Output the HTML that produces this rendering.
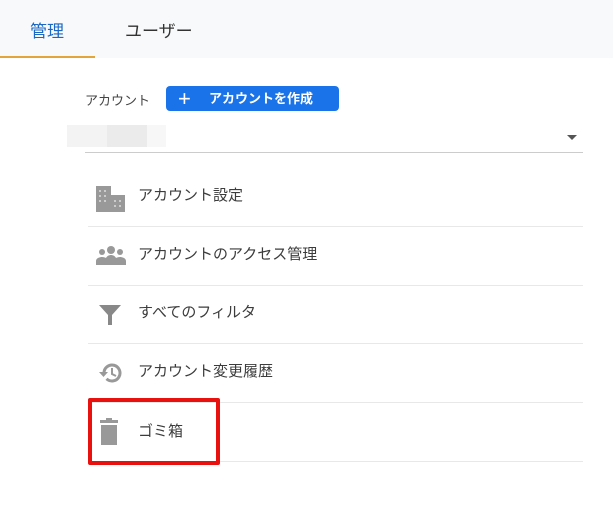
<!DOCTYPE html>
<html><head><meta charset="utf-8"><style>
body{margin:0;width:613px;height:527px;background:#fff;font-family:"Liberation Sans","Noto Sans CJK JP",sans-serif;position:relative;overflow:hidden}
.abs{position:absolute}
.top{left:0;top:0;width:613px;height:58px;background:#f8f9fa}
.t{font-size:17px;top:17px}
.row{position:absolute;left:138px;font-size:15px;color:#3c3c3c;line-height:20px}
.sep{position:absolute;left:88px;width:495px;height:1px;background:#e8e8e8}
.ic{position:absolute;left:96px}
</style></head><body>
<div class="abs top"></div>
<div class="abs t" style="left:30px;color:#1a67c4">管理</div>
<div class="abs t" style="left:125px;color:#333">ユーザー</div>
<div class="abs" style="left:0;top:56px;width:95px;height:2px;background:#e3a43c"></div>

<div class="abs" style="left:85px;top:90px;font-size:13px;color:#444">アカウント</div>
<div class="abs" style="left:166px;top:86px;width:173px;height:25px;background:#1a73e8;border-radius:4px;color:#fff;font-size:13px;font-weight:bold;line-height:25px">
<span style="position:absolute;left:12px;top:0;font-size:22px;font-weight:normal">+</span><span style="position:absolute;left:43px">アカウントを作成</span></div>
<div class="abs" style="left:67px;top:125px;width:40px;height:22px;background:#f3f3f3"></div>
<div class="abs" style="left:107px;top:125px;width:40px;height:22px;background:#ebebeb"></div>
<div class="abs" style="left:147px;top:125px;width:19px;height:22px;background:#f7f7f7"></div>
<div class="abs" style="left:85px;top:152px;width:498px;height:1px;background:#ccc"></div>
<div class="abs" style="left:567px;top:135px;width:0;height:0;border-left:5px solid transparent;border-right:5px solid transparent;border-top:5px solid #555"></div>

<svg class="ic" style="top:184px" width="30" height="28" viewBox="0 0 30 28"><rect x="0" y="2" width="15" height="26" fill="#999"/><rect x="15" y="11" width="14" height="17" fill="#999"/><g fill="#ccc"><rect x="3" y="6" width="2" height="2"/><rect x="8" y="6" width="2" height="2"/><rect x="3" y="11" width="2" height="2"/><rect x="8" y="11" width="2" height="2"/><rect x="3" y="16" width="2" height="2"/><rect x="8" y="16" width="2" height="2"/><rect x="18" y="16" width="2" height="2"/><rect x="23" y="16" width="2" height="2"/><rect x="18" y="21" width="2" height="2"/><rect x="23" y="21" width="2" height="2"/></g></svg>
<div class="row" style="top:186px">アカウント設定</div>
<div class="sep" style="top:226px"></div>

<svg class="ic" style="top:245px" width="30" height="22" viewBox="0 0 30 22"><g fill="#999"><circle cx="15" cy="5" r="4"/><circle cx="6" cy="7" r="3"/><circle cx="24" cy="7" r="3"/><path d="M0 20v-4c0-3 4-4 6-4s3 .5 4 1c1-2 3-3 5-3s4 1 5 3c1-.5 2-1 4-1s6 1 6 4v4z"/></g></svg>
<div class="row" style="top:245px">アカウントのアクセス管理</div>
<div class="sep" style="top:285px"></div>

<svg class="ic" style="top:303px" width="30" height="24" viewBox="0 0 30 24"><path d="M3 2h22l-9 10v10h-4V12z" fill="#888"/></svg>
<div class="row" style="top:303px">すべてのフィルタ</div>
<div class="sep" style="top:343px"></div>

<svg class="ic" style="top:361px" width="30" height="24" viewBox="0 0 30 24"><path d="M8 12a8 8 0 1 1 2.5 5.8" stroke="#999" stroke-width="3" fill="none"/><path d="M3 11h9l-4.5 5z" fill="#999"/><path d="M16 7v6l4 2" stroke="#999" stroke-width="2" fill="none"/></svg>
<div class="row" style="top:362px">アカウント変更履歴</div>
<div class="sep" style="top:402px"></div>

<svg class="ic" style="top:418px" width="30" height="28" viewBox="0 0 30 28"><rect x="4" y="2" width="18" height="3" fill="#999"/><rect x="10" y="0" width="6" height="3" fill="#999"/><rect x="5" y="7" width="16" height="20" fill="#999"/></svg>
<div class="row" style="top:422px">ゴミ箱</div>
<div class="sep" style="top:461px"></div>

<div class="abs" style="left:88px;top:398px;width:124px;height:59px;border:4px solid #e8110f;border-radius:2px"></div>
</body></html>
